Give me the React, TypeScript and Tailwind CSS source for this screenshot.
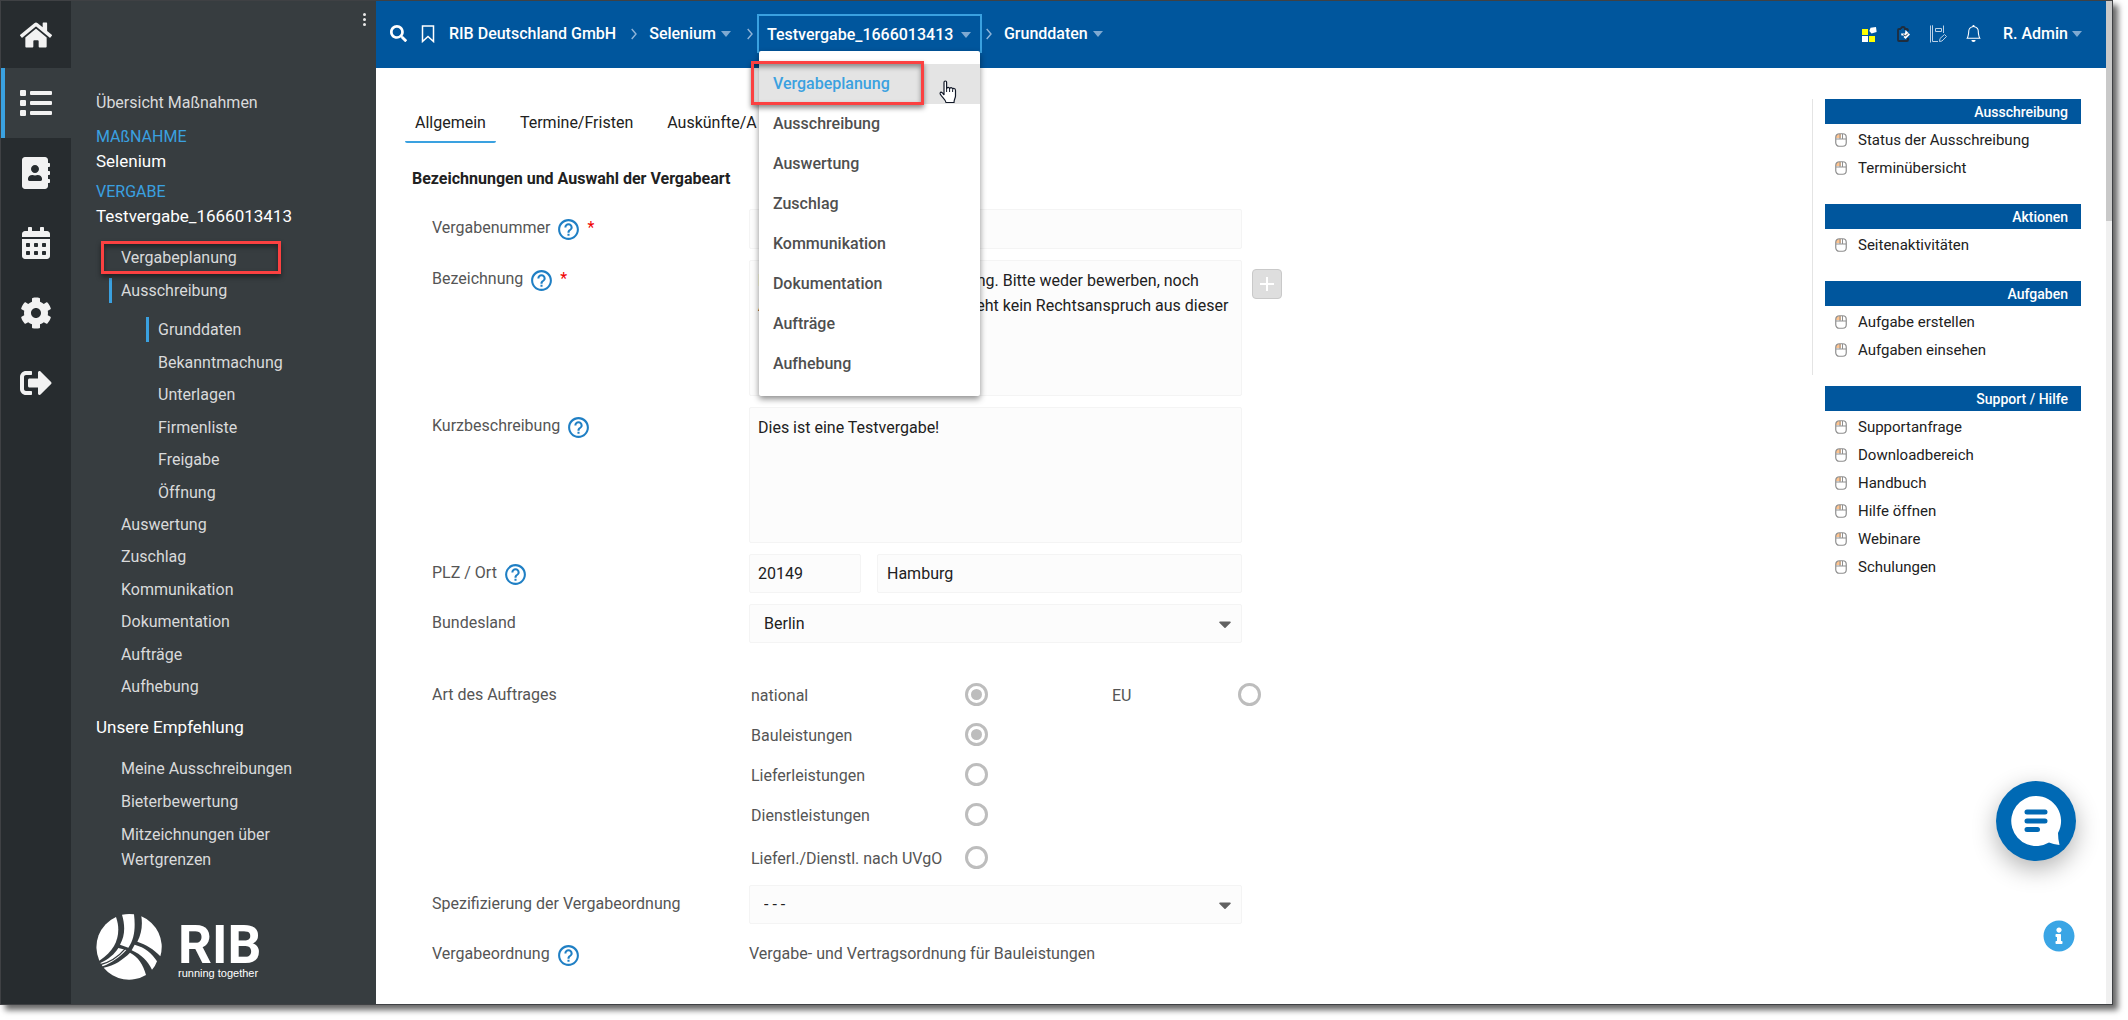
import type { ReactNode } from 'react';
import clsx from 'clsx';
import {
  FaAddressBook,
  FaCalendarAlt,
  FaCaretDown,
  FaCog,
  FaHome,
  FaInfoCircle,
  FaList,
  FaSearch,
  FaSignOutAlt,
} from 'react-icons/fa';
import { BsBell } from 'react-icons/bs';
import { MdHelpOutline } from 'react-icons/md';

const railItems = [
  { label: 'Maßnahmen', icon: FaList, active: true },
  { label: 'Adressbuch', icon: FaAddressBook },
  { label: 'Kalender', icon: FaCalendarAlt },
  { label: 'Einstellungen', icon: FaCog },
  { label: 'Abmelden', icon: FaSignOutAlt },
];

const subItems = ['Grunddaten', 'Bekanntmachung', 'Unterlagen', 'Firmenliste', 'Freigabe', 'Öffnung'];
const phases = ['Auswertung', 'Zuschlag', 'Kommunikation', 'Dokumentation', 'Aufträge', 'Aufhebung'];
const menuItems = ['Vergabeplanung', 'Ausschreibung', ...phases];

const orderTypes = ['Bauleistungen', 'Lieferleistungen', 'Dienstleistungen', 'Lieferl./Dienstl. nach UVgO'];

const contextSections = [
  { title: 'Ausschreibung', links: ['Status der Ausschreibung', 'Terminübersicht'] },
  { title: 'Aktionen', links: ['Seitenaktivitäten'] },
  { title: 'Aufgaben', links: ['Aufgabe erstellen', 'Aufgaben einsehen'] },
];

const supportSection = {
  title: 'Support / Hilfe',
  links: ['Supportanfrage', 'Downloadbereich', 'Handbuch', 'Hilfe öffnen', 'Webinare', 'Schulungen'],
};

const fieldClass = 'rounded-xs border border-[#f4f4f4] bg-[#fcfcfc] text-[#212121]';

const Logo = () => (
  <div className="flex gap-4 text-white">
    <svg className="size-[66px]" viewBox="0 0 198 198" fill="currentColor" aria-hidden="true">
      <path d="M60 9 C76 54 66 104 10 140 A99 99 0 0 1 60 9Z" />
      <path d="M78 2 Q96 -1 114 1 C119 42 115 76 97 101 L72 92 C87 66 88 36 78 2Z" />
      <path d="M136 7 A99 99 0 0 1 193 127 C173 105 150 92 124 83 C137 58 140 32 136 7Z" />
      <path d="M13 147 C38 136 56 120 67 102 L91 108 C70 130 48 146 20 157Z" />
      <path d="M116 92 C146 100 168 118 183 142 Q178 157 168 167 C155 142 136 121 107 109Z" />
      <path d="M102 116 C126 128 142 151 150 183 A99 99 0 0 1 23 161 C56 154 80 138 102 116Z" />
      <path d="M10 153 C40 146 66 130 88 104" fill="none" stroke="#373d40" strokeWidth="4" />
    </svg>
    <div className="flex flex-col pt-[10px]">
      <span className="text-[53px] leading-[42px] font-bold">RIB</span>
      <span className="font-['Liberation_Sans_Narrow','Liberation_Sans',sans-serif] text-[11px] leading-[14px]">
        running together
      </span>
    </div>
  </div>
);

const MouseIcon = () => (
  <svg className="h-[14px] w-3 shrink-0" viewBox="0 0 12 14" fill="none" aria-hidden="true">
    <path d="M1 5 V3.5 Q1 1 3.5 1 H6 V5Z" fill="#ffc48f" />
    <rect x="0.75" y="0.75" width="10.5" height="12.5" rx="3.5" stroke="#8f8f8f" strokeWidth="1.2" />
    <path d="M1 6 H11 M5 1 V6 M7.5 1 V6" stroke="#8f8f8f" />
  </svg>
);

const HandCursor = () => (
  <svg className="absolute top-[29px] left-[180px] h-6 w-[18px]" viewBox="0 0 18 24" aria-hidden="true">
    <path
      d="M5 15 V2.5 Q5 1 6.3 1 T7.6 2.5 V9 Q7.8 7.2 9.2 7.3 T10.6 9 Q10.8 7.6 12.2 7.7 T13.6 9.4 Q13.9 8.3 15.2 8.5 T16.5 10.5 V16 C16.5 18 15 19.5 15 22.5 H7 C6.5 19.5 3 17.5 1.2 14 Q0.8 12.4 2.2 12.2 Q3.6 12.4 5 15Z"
      fill="#fff"
      stroke="#111827"
      strokeWidth="1.2"
    />
    <path d="M7.6 8 V12 M10.6 9 V12 M13.6 9.5 V12" stroke="#111827" />
  </svg>
);

const Chevron = () => (
  <svg className="mx-1 h-3 w-[6px] shrink-0" viewBox="0 0 6 12" fill="none" aria-hidden="true">
    <path d="M0.7 1 L5 6 L0.7 11" stroke="#8fb4d8" strokeWidth="1.4" />
  </svg>
);

const Caret = () => (
  <svg className="h-[6px] w-[10px] shrink-0" viewBox="0 0 10 6" aria-hidden="true">
    <path d="M0 0 H10 L5 6Z" fill="#7fa9d1" />
  </svg>
);

const Highlight = ({ className }: { className: string }) => (
  <span
    className={clsx(
      'pointer-events-none absolute border-3 border-[#fb4141] shadow-[0_3px_5px_rgba(0,0,0,0.45),inset_0_3px_5px_rgba(0,0,0,0.4)]',
      className,
    )}
  />
);

const SideLink = ({ children, active }: { children: ReactNode; active?: boolean }) => (
  <a
    href="#"
    className={clsx('-ml-3 block border-l-3 pl-[9px] leading-[25px]', active ? 'border-[#3aa1e0]' : 'border-transparent')}
  >
    {children}
  </a>
);

const Sidebar = () => (
  <aside className="relative w-[305px] shrink-0 bg-[#373d40] pr-6 pl-[25px] text-[#d9dadb]">
    <button type="button" aria-label="Menü" className="absolute top-2 right-[6px] flex flex-col items-center gap-[2px] p-1">
      <i className="size-[3px] rounded-full bg-[#e8e8e8]" />
      <i className="size-[3px] rounded-full bg-[#e8e8e8]" />
      <i className="size-[3px] rounded-full bg-[#e8e8e8]" />
    </button>
    <a href="#" className="mt-[89px] block leading-[25px]">
      Übersicht Maßnahmen
    </a>
    <p className="mt-[9px] leading-[25px] text-[#3aa1e0]">MAßNAHME</p>
    <p className="text-[17px] leading-[25px] text-white">Selenium</p>
    <p className="mt-[5px] leading-[25px] text-[#3aa1e0]">VERGABE</p>
    <p className="text-[17px] leading-[25px] text-white">Testvergabe_1666013413</p>

    <nav className="mt-4 pl-[25px]">
      <div className="relative">
        <SideLink>Vergabeplanung</SideLink>
        <Highlight className="-top-1 -left-5 h-[33px] w-[180px]" />
      </div>
      <div className="mt-2">
        <SideLink active>Ausschreibung</SideLink>
      </div>
      <ul className="mt-[14px] flex h-[188px] flex-col justify-between pl-[37px]">
        {subItems.map((item, idx) => (
          <li key={item}>
            <SideLink active={idx === 0}>{item}</SideLink>
          </li>
        ))}
      </ul>
      <ul className="mt-[7px] flex h-[187px] flex-col justify-between">
        {phases.map((item) => (
          <li key={item}>
            <SideLink>{item}</SideLink>
          </li>
        ))}
      </ul>
    </nav>

    <h2 className="mt-4 text-[17px] leading-[25px] text-white">Unsere Empfehlung</h2>
    <nav className="mt-4 flex flex-col gap-2 pl-[25px]">
      <SideLink>Meine Ausschreibungen</SideLink>
      <SideLink>Bieterbewertung</SideLink>
      <SideLink>
        Mitzeichnungen über
        <br />
        Wertgrenzen
      </SideLink>
    </nav>
    <div className="mt-[42px]">
      <Logo />
    </div>
  </aside>
);

const Rail = () => (
  <nav className="flex w-[70px] shrink-0 flex-col bg-[#272c2f] text-[#f2f2f2]">
    <a href="#" aria-label="Startseite" className="flex h-[67px] items-center justify-center">
      <FaHome size={32} />
    </a>
    {railItems.map(({ label, icon: Icon, active }) => (
      <a
        key={label}
        href="#"
        aria-label={label}
        className={clsx(
          'flex h-[70px] items-center justify-center border-l-4 pr-1',
          active ? 'border-[#3aa1e0] bg-[#373d40]' : 'border-transparent',
        )}
      >
        <Icon size={32} />
      </a>
    ))}
  </nav>
);

const PhaseMenu = () => (
  <div className="absolute top-[35px] left-0 z-10 w-[221px] rounded-xs bg-white pt-[13px] pb-3 text-[#4f4f4f] shadow-[0_3px_6px_rgba(0,0,0,0.45)]">
    <ul>
      {menuItems.map((item, idx) => (
        <li key={item}>
          <a
            href="#"
            className={clsx('block pl-[14px] leading-10', idx === 0 && 'bg-[#e4e4e4] text-[#3aa1e0]')}
          >
            {item}
          </a>
        </li>
      ))}
    </ul>
    <Highlight className="top-[10px] -left-2 h-[44px] w-[173px]" />
    <HandCursor />
  </div>
);

const TopBar = () => (
  <header className="flex h-[67px] shrink-0 items-center bg-[#00569d] pr-6 pb-[2px] pl-[14px] font-medium text-white">
    <button type="button" aria-label="Suchen">
      <FaSearch size={17} />
    </button>
    <button type="button" aria-label="Lesezeichen" className="ml-[14px]">
      <svg className="h-[18px] w-[14px]" viewBox="0 0 14 18" fill="none" stroke="currentColor" strokeWidth="1.5">
        <path d="M1.5 1 H12.5 V16.5 L7 11.5 L1.5 16.5Z" />
      </svg>
    </button>
    <a href="#" className="mr-[11px] ml-[14px]">
      RIB Deutschland GmbH
    </a>
    <Chevron />
    <button type="button" className="flex items-center gap-[5px] px-2">
      Selenium <Caret />
    </button>
    <span className="ml-1">
      <Chevron />
    </span>
    <div className="relative border-2 border-b-0 border-[#3aa1e0]">
      <button type="button" aria-expanded="true" className="flex h-[37px] w-[221px] items-center gap-2 px-2">
        Testvergabe_1666013413 <Caret />
      </button>
      <PhaseMenu />
    </div>
    <Chevron />
    <button type="button" className="flex items-center gap-[5px] px-2">
      Grunddaten <Caret />
    </button>

    <div className="ml-auto flex items-center">
      <button type="button" aria-label="Anwendungen">
        <svg className="size-4" viewBox="0 0 16 16" aria-hidden="true">
          <path d="M1 3 h6 v6 h-6Z" fill="#ff0" />
          <path d="M8 10 h6 v6 h-6Z" fill="#ff0" />
          <path d="M1 10 h6 v6 h-6Z" fill="#fff" />
          <path d="M9.5 1.8 L15 1 L15.6 6 L10.5 7.5 L8.3 5Z" fill="#fff" />
        </svg>
      </button>
      <button type="button" aria-label="Aufgaben" className="ml-5">
        <svg className="h-4 w-[14px]" viewBox="0 0 14 16" fill="none" aria-hidden="true">
          <path
            d="M4 3 H2 Q1 3 1 4 V14 Q1 15 2 15 H10 Q11 15 11 14 V12 M4 3 Q4 1 6 1 T8 3 H10 Q11 3 11 5"
            stroke="#1f2d3d"
            strokeWidth="1.8"
          />
          <path d="M8.5 4 L13 8.5 L8.5 13 L6.5 11 L8 9.5 L4.5 9.5 L4 7.5 L8 7.5Z" fill="#fff" />
          <path d="M6.5 8.5 L8.5 10 L11 7.5" stroke="#1f2d3d" />
        </svg>
      </button>
      <button type="button" aria-label="Notizen" className="ml-[18px]">
        <svg className="size-[18px]" viewBox="0 0 18 18" fill="none" stroke="#b9d0e6" aria-hidden="true">
          <path d="M1.5 0.5 V17.5 M3.5 0.5 V16.5 H9 M3.5 0.5 H4 M14.5 0.5 V8 M6.5 3.5 H12.5 V6.5 H6.5Z" />
          <path d="M10.5 16.5 L11 13.5 L15.5 9.5 L17.5 11.5 L13 16Z" />
        </svg>
      </button>
      <button type="button" aria-label="Benachrichtigungen" className="ml-[18px]">
        <BsBell size={17} />
      </button>
      <button type="button" className="ml-[21px] flex items-center gap-1">
        R. Admin <Caret />
      </button>
    </div>
  </header>
);

type FieldProps = { label: string; htmlFor?: string; help?: boolean; required?: boolean; children: ReactNode };

const Field = ({ label, htmlFor, help, required, children }: FieldProps) => (
  <div className="grid grid-cols-[317px_minmax(0,1fr)] items-start">
    <div className="flex h-[38px] items-center">
      <label htmlFor={htmlFor}>{label}</label>
      {help && (
        <button type="button" aria-label={'Hilfe zu ' + label} className="ml-[6px] pt-[2px] text-[#1f7fc4]">
          <MdHelpOutline size={25} />
        </button>
      )}
      {required && <span className="ml-[6px] text-[#f00000]">*</span>}
    </div>
    <div>{children}</div>
  </div>
);

const Dropdown = ({ id, value }: { id: string; value: string }) => (
  <div className="relative w-[493px]">
    <select id={id} className={clsx(fieldClass, 'h-[39px] w-full appearance-none px-[14px]')}>
      <option>{value}</option>
    </select>
    <FaCaretDown size={20} className="pointer-events-none absolute top-[10px] right-[7px] text-[#616161]" />
  </div>
);

const radioClass =
  'mb-1 size-[23px] appearance-none rounded-full border-3 border-[#bdbdbd] bg-clip-content p-[3px] checked:bg-[#bdbdbd]';

const Radio = ({ name, label, checked, labelWidth }: { name: string; label: string; checked?: boolean; labelWidth: string }) => (
  <label className="flex items-center">
    <span className={labelWidth}>{label}</span>
    <input type="radio" name={name} defaultChecked={checked} className={radioClass} />
  </label>
);

const TenderForm = () => (
  <main className="min-w-0 flex-1 pt-[35px] pl-[29px]">
    <div role="tablist" className="flex gap-[14px] text-[#212121]">
      {['Allgemein', 'Termine/Fristen', 'Auskünfte/A'].map((tab, idx) => (
        <button
          key={tab}
          type="button"
          role="tab"
          aria-selected={idx === 0}
          className={clsx(
            'h-10 rounded-xs border-b-2 px-[10px] pt-[2px]',
            idx === 0 ? 'border-[#3aa1e0]' : 'border-transparent',
          )}
        >
          {tab}
        </button>
      ))}
    </div>
    <h1 className="mt-6 pl-[7px] leading-6 font-bold text-[#212121]">Bezeichnungen und Auswahl der Vergabeart</h1>

    <form className="mt-[18px] flex flex-col gap-[11px] pl-[27px]">
      <Field label="Vergabenummer" htmlFor="nummer" help required>
        <input id="nummer" className={clsx(fieldClass, 'block h-10 w-[493px] px-2')} />
      </Field>
      <Field label="Bezeichnung" htmlFor="bezeichnung" help required>
        <div className="flex items-start gap-[10px]">
          <textarea
            id="bezeichnung"
            className={clsx(fieldClass, 'block h-[136px] w-[493px] shrink-0 resize-none px-2 py-[7px] leading-[25px]')}
            defaultValue={
              'Dies ist eine Probeausschreibung. Bitte weder bewerben, noch\nAngebote einreichen. Hier besteht kein Rechtsanspruch aus dieser'
            }
          />
          <button
            type="button"
            aria-label="Hinzufügen"
            className="mt-[9px] flex size-[30px] items-center justify-center rounded border border-[#c9c9c9] bg-[#dedede]"
          >
            <svg className="size-[14px]" viewBox="0 0 14 14" stroke="#fff" strokeWidth="2">
              <path d="M7 0 V14 M0 7 H14" />
            </svg>
          </button>
        </div>
      </Field>
      <Field label="Kurzbeschreibung" htmlFor="kurz" help>
        <textarea
          id="kurz"
          className={clsx(fieldClass, 'block h-[136px] w-[493px] resize-none px-2 py-[7px] leading-[25px]')}
          defaultValue="Dies ist eine Testvergabe!"
        />
      </Field>
      <Field label="PLZ / Ort" htmlFor="plz" help>
        <div className="flex gap-4">
          <input id="plz" defaultValue="20149" className={clsx(fieldClass, 'h-[39px] w-28 px-2')} />
          <input aria-label="Ort" defaultValue="Hamburg" className={clsx(fieldClass, 'h-[39px] w-[365px] px-[9px]')} />
        </div>
      </Field>
      <Field label="Bundesland" htmlFor="land">
        <Dropdown id="land" value="Berlin" />
      </Field>
      <div className="mt-[22px]">
        <Field label="Art des Auftrages">
          <div className="flex flex-col pl-[2px]">
            <div className="flex h-10 items-center gap-[124px]">
              <Radio name="region" label="national" checked labelWidth="w-[214px]" />
              <Radio name="region" label="EU" labelWidth="w-[126px]" />
            </div>
            {orderTypes.map((type, idx) => (
              <div key={type} className={clsx('flex items-center', idx === orderTypes.length - 1 ? 'h-[46px]' : 'h-10')}>
                <Radio name="type" label={type} checked={idx === 0} labelWidth="w-[214px]" />
              </div>
            ))}
          </div>
        </Field>
      </div>
      <div className="-mt-2">
        <Field label="Spezifizierung der Vergabeordnung" htmlFor="spez">
          <Dropdown id="spez" value="- - -" />
        </Field>
      </div>
      <Field label="Vergabeordnung" help>
        <p className="leading-[38px]">Vergabe- und Vertragsordnung für Bauleistungen</p>
      </Field>
    </form>
  </main>
);

const ContextSection = ({ title, links }: { title: string; links: string[] }) => (
  <section>
    <h2 className="mb-[2px] bg-[#00569d] pt-px pr-[13px] text-right text-[14px] leading-6 font-medium text-white">
      {title}
    </h2>
    <ul>
      {links.map((link) => (
        <li key={link}>
          <a href="#" className="flex h-7 items-center gap-[11px] pl-[10px]">
            <MouseIcon />
            {link}
          </a>
        </li>
      ))}
    </ul>
  </section>
);

const ContextPanel = () => (
  <aside className="mt-[31px] mr-[25px] w-[269px] shrink-0 text-[15px] text-[#212121]">
    <div className="flex flex-col gap-[22px] border-l border-[#e4e4e4] pb-[11px] pl-3">
      {contextSections.map((section) => (
        <ContextSection key={section.title} {...section} />
      ))}
    </div>
    <div className="mt-[11px] pl-[13px]">
      <ContextSection {...supportSection} />
    </div>
  </aside>
);

const App = () => {
  return (
    <div className="flex min-h-screen bg-white pr-[15px] pb-[15px] font-['Roboto',sans-serif] text-[16px] leading-6 text-[#555]">
      <div className="relative flex flex-1 border border-[#3f4144] bg-white shadow-[5px_5px_6px_rgba(0,0,0,0.6)]">
        <Rail />
        <Sidebar />
        <div className="flex min-w-0 flex-1 flex-col">
          <TopBar />
          <div className="flex flex-1 items-start">
            <TenderForm />
            <ContextPanel />
          </div>
        </div>
        <div className="w-[6px] shrink-0 bg-[#f0f0f0]">
          <div className="h-[220px] bg-[#c9c9c9]" />
        </div>

        <button
          type="button"
          aria-label="Chat öffnen"
          className="absolute right-[36px] bottom-[143px] size-20 rounded-full bg-[#0069b4] shadow-[0_8px_24px_rgba(0,0,0,0.3)]"
        >
          <svg viewBox="0 0 80 80" aria-hidden="true">
            <path d="M40 15 A25 25 0 0 1 62 52 Q62 58 63.5 64 Q57 63 53 61.5 A25 25 0 1 1 40 15Z" fill="#fff" />
            <path d="M31 31 H49 M31 40 H49 M31 48.5 H41.5" stroke="#0069b4" strokeWidth="5" strokeLinecap="round" />
          </svg>
        </button>
        <button type="button" aria-label="Information" className="absolute right-[37px] bottom-[52px] text-[#3aa5e5]">
          <FaInfoCircle size={32} />
        </button>
      </div>
    </div>
  );
};

export default App;
